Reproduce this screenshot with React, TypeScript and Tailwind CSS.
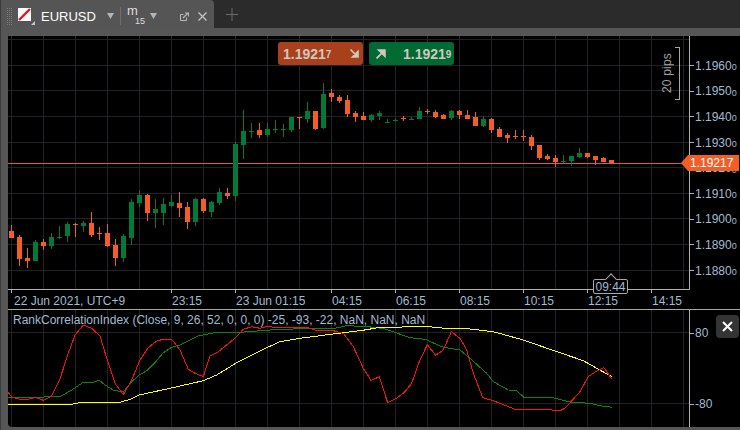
import React from "react";

// [wickTop, wickBottom, bodyTop, bodyBottom, up]
const candles: [number, number, number, number, number][] = [
  [225, 238, 231, 238, 0], [235, 266, 237, 259, 0], [248, 268, 258, 261, 0], [240, 261, 242, 261, 1],
  [239, 250, 242, 246, 0], [233, 249, 237, 246, 1], [226, 239, 237, 238, 1], [222, 242, 224, 236, 1],
  [223, 237, 224, 225, 0], [221, 232, 223, 226, 1], [212, 237, 223, 235, 0], [227, 240, 233, 234, 0],
  [224, 247, 233, 246, 0], [239, 266, 245, 258, 0], [234, 262, 236, 258, 1], [199, 245, 202, 238, 1],
  [191, 207, 195, 203, 1], [194, 221, 195, 213, 0], [199, 228, 209, 213, 1], [198, 225, 204, 213, 1],
  [195, 207, 202, 206, 1], [192, 217, 203, 208, 0], [202, 229, 207, 222, 0], [198, 226, 199, 222, 1],
  [198, 213, 199, 211, 0], [201, 217, 202, 212, 1], [188, 205, 192, 203, 1], [188, 199, 193, 196, 0],
  [142, 201, 144, 196, 1], [110, 159, 131, 145, 1], [123, 138, 131, 132, 1], [123, 138, 130, 135, 0],
  [123, 137, 129, 135, 1], [120, 133, 129, 130, 1], [124, 137, 129, 130, 1], [117, 132, 117, 130, 1],
  [117, 129, 117, 118, 0], [102, 123, 111, 119, 1], [111, 130, 111, 129, 0], [83, 129, 94, 128, 1],
  [89, 102, 93, 97, 0], [95, 103, 97, 101, 0], [95, 117, 100, 114, 0], [111, 122, 113, 117, 0],
  [112, 120, 116, 120, 0], [114, 122, 115, 120, 1], [111, 120, 113, 116, 1], [119, 123, 122, 123, 1],
  [118, 121, 120, 121, 1], [116, 121, 118, 119, 0], [117, 120, 119, 120, 1], [107, 119, 111, 119, 1],
  [109, 114, 111, 112, 0], [110, 118, 112, 117, 0], [114, 119, 115, 119, 0], [110, 120, 111, 118, 1],
  [110, 119, 111, 115, 0], [110, 119, 115, 119, 0], [112, 126, 117, 126, 0], [116, 127, 119, 126, 1],
  [118, 133, 119, 130, 0], [127, 137, 129, 137, 0], [133, 143, 135, 138, 0], [130, 139, 136, 137, 0],
  [130, 141, 136, 137, 0], [135, 150, 137, 146, 0], [145, 160, 145, 158, 0], [154, 160, 156, 159, 0],
  [155, 167, 158, 162, 0], [155, 163, 161, 162, 1], [156, 166, 156, 161, 1], [148, 158, 153, 157, 1],
  [153, 158, 153, 157, 0], [156, 165, 156, 160, 0], [157, 162, 158, 162, 0], [160, 163, 160, 163, 0],
];

// indicator lines, traced in two halves
const left = (p: number[][]) => p.map(([x, y]) => `${(x / 3).toFixed(1)},${(280 + y / 3).toFixed(1)}`);
const right = (p: number[][]) => p.map(([x, y]) => `${(370 + x / 3).toFixed(1)},${(270 + y / 3).toFixed(1)}`);

const redLine = [
  ...left([[24, 336], [35, 352], [60, 358], [85, 358], [105, 352], [130, 361], [155, 348], [180, 296], [205, 220], [225, 165], [250, 135], [275, 145], [300, 168], [322, 240], [345, 310], [370, 344], [395, 300], [420, 240], [445, 203], [470, 183], [490, 178], [515, 178], [540, 210], [565, 268], [585, 280], [610, 290], [630, 228], [655, 215], [680, 195], [705, 175], [730, 148], [755, 140], [780, 145], [800, 140], [850, 143], [925, 143], [945, 150], [1000, 152], [1030, 160], [1060, 200], [1090, 265], [1110, 296]]),
  ...right([[0, 333], [28, 320], [53, 398], [80, 385], [105, 365], [125, 340], [148, 275], [172, 224], [197, 256], [220, 240], [244, 185], [270, 205], [290, 240], [310, 310], [338, 383], [370, 392], [435, 418], [522, 418], [570, 422], [585, 415], [630, 365], [655, 320], [680, 303], [702, 293], [725, 327]]),
].join(" ");

const greenLine = [
  ...left([[24, 353], [180, 350], [215, 330], [250, 307], [280, 307], [298, 301], [315, 315], [340, 330], [370, 336], [395, 305], [418, 285], [440, 272], [465, 248], [490, 218], [515, 202], [540, 195], [565, 182], [595, 168], [650, 157], [720, 157], [810, 150], [900, 146], [1000, 146], [1040, 137], [1110, 140]]),
  ...right([[0, 172], [40, 175], [120, 203], [165, 208], [220, 232], [270, 240], [300, 265], [350, 310], [370, 335], [415, 360], [438, 361], [462, 382], [545, 382], [600, 396], [660, 400], [690, 407], [725, 412]]),
].join(" ");

const yellowLine = [
  ...left([[24, 373], [215, 373], [240, 368], [360, 367], [390, 358], [418, 345], [510, 325], [610, 302], [650, 285], [710, 248], [800, 203], [840, 185], [900, 175], [1000, 162], [1110, 148]]),
  ...right([[0, 175], [40, 173], [120, 170], [180, 169], [190, 173], [300, 177], [370, 185], [460, 210], [540, 238], [640, 272], [725, 320]]),
].join(" ");

const gridX = Array.from({ length: 22 }, (_, i) => 11.5 + 32 * i);
const gridY = Array.from({ length: 10 }, (_, i) => Math.floor(39.6 + 25.6 * i) + 0.5);
const prices = ["1.1960", "1.1950", "1.1940", "1.1930", "1.1920", "1.1910", "1.1900", "1.1890", "1.1880"];
const times: [string, string, string][] = [
  ["22 Jun 2021, UTC+9", "w-[160px]", "ml-[3px]"],
  ["23:15", "w-[64px]", "ml-px"],
  ["23 Jun 01:15", "w-[96px]", "ml-px"],
  ["04:15", "w-[64px]", "ml-px"],
  ["06:15", "w-[64px]", "ml-px"],
  ["08:15", "w-[64px]", "ml-px"],
  ["10:15", "w-[64px]", "ml-px"],
  ["12:15", "w-[64px]", "ml-px"],
  ["14:15", "w-[37px]", "ml-px"],
];

const Caret = () => (
  <svg width="7" height="6" viewBox="0 0 7 6" className="shrink-0">
    <path d="M0 0h7L3.5 6z" fill="#b4b4b4" />
  </svg>
);

const App: React.FC = () => {
  return (
    <div className="w-[740px] h-[430px] overflow-hidden bg-[#2b2b2b] font-['Liberation_Sans',Arial,sans-serif] flex flex-col">
      {/* Tab strip */}
      <div className="h-[28px] flex shrink-0">
        <div className="w-[214px] bg-[#555555] rounded-tr-[4px] border-l border-[#3a3a3a] flex items-center pl-[6px] pt-[4px]">
          <svg width="5" height="17" viewBox="0 0 5 17" className="shrink-0">
            <path d="M0.5 0v17M2.5 0v17M4.5 0v17" stroke="#7a7a7a" strokeDasharray="1 1" />
          </svg>
          <div className="relative ml-[6px] w-[13px] h-[13px] bg-white shrink-0 -mt-[4px]">
            <svg width="13" height="13" viewBox="0 0 13 13" className="block">
              <path d="M1 12L12 1" stroke="#e8141c" strokeWidth="2.4" />
            </svg>
            <svg width="4" height="4" viewBox="0 0 4 4" className="absolute left-[13px] top-[13px]">
              <path d="M4 0v4H0z" fill="#c8c8c8" />
            </svg>
          </div>
          <span className="ml-[10px] w-[66px] text-[13px] leading-none text-white">EURUSD</span>
          <Caret />
          <div className="ml-[6px] w-px h-[18px] bg-[#6e6e6e]" />
          <div className="ml-[6px] w-[23px] relative h-[22px] text-[#dcdcdc] -mt-[4px]">
            <span className="absolute left-0 top-[3px] text-[13px] leading-[10px]">m</span>
            <span className="absolute left-[8px] top-[14px] text-[9px] leading-none">15</span>
          </div>
          <Caret />
          <svg width="9" height="9" viewBox="0 0 9 9" className="ml-[23px] shrink-0">
            <path d="M0.5 2.5h3M0.5 2.5v6h6v-3" fill="none" stroke="#b8b8b8" />
            <path d="M3 6L7.5 1.5M5 1h3.5v3.5" fill="none" stroke="#b8b8b8" strokeWidth="1.2" />
          </svg>
          <svg width="9" height="9" viewBox="0 0 9 9" className="ml-[9px] shrink-0">
            <path d="M0.5 0.5l8 8M8.5 0.5l-8 8" stroke="#c4c4c4" strokeWidth="1.3" />
          </svg>
        </div>
        <div className="ml-[12px] flex items-center">
          <svg width="12" height="13" viewBox="0 0 12 13" className="block">
            <path d="M0 6.5h12M6 0v13" stroke="#6a6a6a" />
          </svg>
        </div>
      </div>

      {/* Chart frame */}
      <div className="flex-1 bg-[#565656] border-l border-[#3a3a3a] pl-[7px] pt-[8px] pb-[3px]">
        <div className="relative w-[732px] h-[391px] bg-black rounded-bl-[4px] flex flex-col overflow-hidden">
          {/* Price pane */}
          <div className="flex h-[254px] shrink-0">
            <div className="relative w-[682px] h-[254px] border-r border-b border-[#b0b0b0] shrink-0">
              <svg width="681" height="253" viewBox="8 36 681 253" className="block" shapeRendering="crispEdges">
                {gridX.map((x) => (
                  <line key={x} x1={x} x2={x} y1={36} y2={289} stroke="#222226" />
                ))}
                {gridY.map((y) => (
                  <line key={y} x1={8} x2={689} y1={y} y2={y} stroke="#222226" />
                ))}
                <line x1={8} x2={689} y1={163.5} y2={163.5} stroke="#e2592a" />
                {candles.map(([wt, wb, bt, bb, up], i) => {
                  const color = up ? "#007a3a" : "#f25e26";
                  const cx = 11.5 + 8 * i;
                  return (
                    <g key={i}>
                      <line x1={cx} x2={cx} y1={wt} y2={wb} stroke={color} />
                      <rect x={cx - 2.5} y={bt} width={5} height={bb - bt} fill={color} />
                    </g>
                  );
                })}
              </svg>

              {/* Sell / buy quotes */}
              <div className="absolute left-[270px] top-[6px] flex gap-[6px] text-[#cfc8c0] font-bold">
                <div className="w-[85px] h-[23px] rounded-[3px] bg-[#a8411b] flex items-center pl-[5px]">
                  <span className="text-[14px] leading-none">1.1921</span>
                  <span className="text-[10px] leading-none mt-[2px]">7</span>
                  <svg width="9" height="9" viewBox="0 0 9 9" className="ml-[19px]">
                    <path d="M0.5 0.5L7 7M8 2.5V8H2.5z" fill="#cfc8c0" stroke="#cfc8c0" strokeWidth="1.6" />
                  </svg>
                </div>
                <div className="w-[85px] h-[23px] rounded-[3px] bg-[#006a32] flex items-center pl-[7px]">
                  <svg width="10" height="10" viewBox="0 0 9 9">
                    <path d="M0.5 8.5L7 2M2.5 1H8V6.5z" fill="#cfc8c0" stroke="#cfc8c0" strokeWidth="1.6" />
                  </svg>
                  <span className="ml-[17px] text-[14px] leading-none">1.1921</span>
                  <span className="text-[10px] leading-none mt-[2px]">9</span>
                </div>
              </div>

              {/* 20 pips ruler */}
              <div className="absolute left-[653px] top-[11px] h-[53px] flex items-center">
                <span className="[writing-mode:vertical-rl] rotate-180 text-[12px] leading-none text-[#a0a0a0] tracking-[0.2px]">20 pips</span>
                <div className="ml-[2px] w-[5px] h-[53px] border-t border-r border-b border-[#a8a8a8]" />
              </div>
            </div>

            {/* Price axis */}
            <div className="flex flex-col pt-[17px]">
              {prices.map((p) => (
                <div key={p} className="h-[25.6px] flex items-center shrink-0 text-[#a3bad2]">
                  <div className="w-[4px] h-px bg-[#b0b0b0]" />
                  <span className="ml-px text-[12px] leading-none">{p}</span>
                  <span className="text-[9px] leading-none mt-[4px]">0</span>
                </div>
              ))}
            </div>
          </div>

          {/* Time axis */}
          <div className="h-[20px] shrink-0 flex pl-[3px] border-b border-[#a8a8a8] text-[#a3bad2] text-[12px] leading-none">
            {times.map(([t, cls, labelCls]) => (
              <div key={t} className={`shrink-0 flex flex-col ${cls}`}>
                <div className="w-px h-[3px] bg-[#b0b0b0] shrink-0" />
                <span className={`mt-[2px] whitespace-nowrap ${labelCls}`}>{t}</span>
              </div>
            ))}
          </div>

          {/* Indicator pane */}
          <div className="flex h-[117px] shrink-0">
            <div className="relative w-[682px] border-r border-[#b0b0b0] shrink-0">
              <svg width="681" height="117" viewBox="8 310 681 117" className="block" shapeRendering="crispEdges">
                {gridX.map((x) => (
                  <line key={x} x1={x} x2={x} y1={310} y2={427} stroke="#222226" />
                ))}
                <line x1={8} x2={689} y1={332.5} y2={332.5} stroke="#222226" />
                <line x1={8} x2={689} y1={403.5} y2={403.5} stroke="#222226" />
                <polyline points={greenLine} fill="none" stroke="#0a860a" strokeWidth="1" />
                <polyline points={yellowLine} fill="none" stroke="#ffff00" strokeWidth="1" />
                <polyline points={redLine} fill="none" stroke="#ff1010" strokeWidth="1" />
              </svg>
              <span className="absolute left-[5px] top-[3px] text-[12px] leading-[14px] text-[#a3bad2] whitespace-nowrap">
                RankCorrelationIndex (Close, 9, 26, 52, 0, 0, 0) -25, -93, -22, NaN, NaN, NaN
              </span>
            </div>
            <div className="relative flex-1 flex flex-col text-[#a3bad2] text-[12px] leading-none pt-[16px]">
              <div className="flex items-center h-[14px]">
                <div className="w-[4px] h-px bg-[#b0b0b0]" />
                <span className="ml-px">80</span>
              </div>
              <div className="flex items-center h-[14px] mt-[57px]">
                <div className="w-[4px] h-px bg-[#b0b0b0]" />
                <span className="ml-px">-80</span>
              </div>
              <button className="absolute left-[26px] top-[5px] w-[23px] h-[23px] rounded-[4px] bg-[#343434] flex items-center justify-center">
                <svg width="11" height="11" viewBox="0 0 11 11">
                  <path d="M1 1l9 9M10 1l-9 9" stroke="#ffffff" strokeWidth="2" />
                </svg>
              </button>
            </div>
          </div>

          {/* Last price tag */}
          <div className="absolute left-[673px] top-[119px] w-[58px] h-[16px] bg-[#f25e26] [clip-path:polygon(7px_0,100%_0,100%_100%,7px_100%,0_50%)] flex items-center pl-[9px] text-white text-[12px] leading-none">
            1.19217
          </div>

          {/* Crosshair time tag */}
          <div className="absolute left-[585px] top-[243px] w-[35px] h-[15px] bg-black border border-[#a8a8a8] rounded-[2px] flex items-center justify-center text-[#a3bad2] text-[12px] leading-none">
            <div className="absolute left-[13px] -top-[5px] w-[8px] h-[8px] bg-black border-l border-t border-[#a8a8a8] rotate-45" />
            <span className="relative">09:44</span>
          </div>
        </div>
      </div>
    </div>
  );
};

export default App;
